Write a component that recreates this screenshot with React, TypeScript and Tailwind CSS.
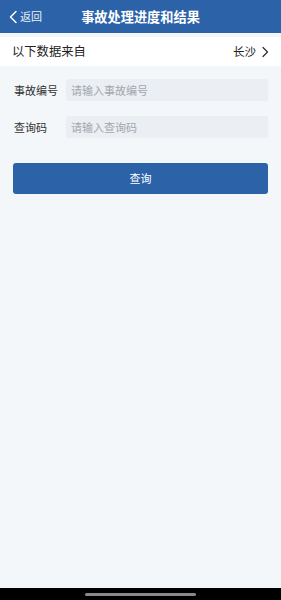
import React from "react";

export default function App() {
  const font = { fontFamily: '"Noto Sans CJK SC", "Noto Sans", sans-serif' };
  return (
    <div className="w-[281px] h-[600px] flex flex-col bg-[#f4f7f9] overflow-hidden" style={font}>
      <div className="h-[33px] bg-[#2b62a8] flex items-center relative shrink-0">
        <div className="flex items-center pl-[8px] text-white">
          <svg width="10" height="14" viewBox="0 0 10 14" fill="none">
            <path d="M8 1.5 L2.5 7 L8 12.5" stroke="white" strokeWidth="1.5" strokeLinecap="round" strokeLinejoin="round" />
          </svg>
          <span className="text-[11px] ml-[2px] leading-none opacity-90">返回</span>
        </div>
        <div className="absolute left-0 right-0 text-center text-white font-bold text-[13.2px] leading-none pointer-events-none">
          事故处理进度和结果
        </div>
      </div>
      <div className="h-[4px] shrink-0" />
      <div className="h-[29px] bg-white flex items-center justify-between px-[12px] shrink-0">
        <span className="text-[12.3px] text-[#222]">以下数据来自</span>
        <div className="flex items-center gap-[5px]">
          <span className="text-[11.5px] text-[#222]">长沙</span>
          <svg width="8" height="12" viewBox="0 0 8 12" fill="none">
            <path d="M2 1.5 L6.5 6 L2 10.5" stroke="#333" strokeWidth="1.3" strokeLinecap="round" strokeLinejoin="round" />
          </svg>
        </div>
      </div>
      <div className="flex flex-col px-[13px] pt-[13px] gap-[15px]">
        <div className="flex items-center">
          <span className="w-[53px] text-[11px] text-[#333] pl-[1px]">事故编号</span>
          <div className="flex-1 h-[22px] bg-[#ebeef2] rounded-[3px] flex items-center px-[5px]">
            <span className="text-[11px] text-[#a3a7ad]">请输入事故编号</span>
          </div>
        </div>
        <div className="flex items-center">
          <span className="w-[53px] text-[11px] text-[#333] pl-[1px]">查询码</span>
          <div className="flex-1 h-[22px] bg-[#ebeef2] rounded-[3px] flex items-center px-[5px]">
            <span className="text-[11px] text-[#a3a7ad]">请输入查询码</span>
          </div>
        </div>
        <div className="mt-[10px] h-[31px] bg-[#2b62a8] rounded-[3px] flex items-center justify-center">
          <span className="text-[11px] text-white">查询</span>
        </div>
      </div>
      <div className="flex-1" />
      <div className="h-[12px] bg-black flex items-center justify-center shrink-0">
        <div className="w-[111px] h-[3px] rounded-full bg-[#8a8a8a]" />
      </div>
    </div>
  );
}
